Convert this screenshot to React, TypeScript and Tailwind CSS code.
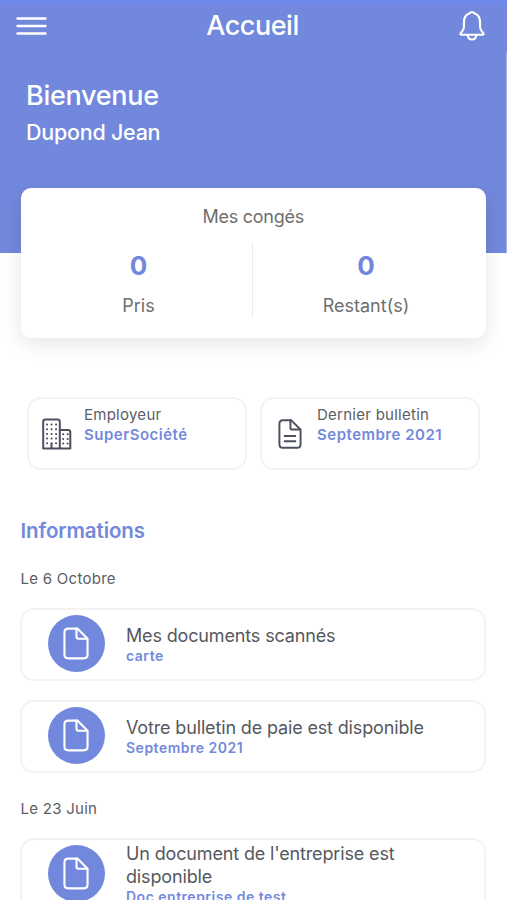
import React from 'react';

interface InfoItem {
  title: string;
  subtitle: string;
}

interface InfoGroup {
  date: string;
  items: InfoItem[];
}

const groups: InfoGroup[] = [
  {
    date: 'Le 6 Octobre',
    items: [
      { title: 'Mes documents scannés', subtitle: 'carte' },
      { title: 'Votre bulletin de paie est disponible', subtitle: 'Septembre 2021' },
    ],
  },
  {
    date: 'Le 23 Juin',
    items: [{ title: "Un document de l'entreprise est disponible", subtitle: 'Doc entreprise de test' }],
  },
];

const MenuIcon = () => (
  <svg width="32" height="20" viewBox="0 0 32 20" fill="none" stroke="currentColor" strokeWidth="2.4" strokeLinecap="round">
    <path d="M2.5 2.5h28M2.5 10h28M2.5 17.5h28" />
  </svg>
);

const BellIcon = () => (
  <svg width="28" height="32" viewBox="0 0 28 32" fill="none" stroke="currentColor" strokeWidth="2.1" strokeLinejoin="round" strokeLinecap="round">
    <path d="M14 2c-1 0-1.900.9-2.900 1.600C7.800 4.900 6 8 6 12v4.500c0 2.200-.6 3.300-1.700 4.700l-1.700 2.100c-.6.8-.3 1.500.7 1.500h21.400c1 0 1.300-.7.7-1.500l-1.700-2.100c-1.100-1.400-1.700-2.500-1.700-4.700V12c0-4-1.800-7.100-5.100-8.400C15.900 2.900 15 2 14 2z" />
    <path d="M9.800 25c.1 2.900 1.900 4.500 4.200 4.500s4.100-1.600 4.200-4.500" />
  </svg>
);

const BuildingIcon = () => (
  <svg width="30" height="32" viewBox="0 0 30 32" fill="none" stroke="currentColor" strokeWidth="2" strokeLinejoin="round" strokeLinecap="round">
    <path d="M1.2 30.5V3.800q0-2.300 2.300-2.300h12q2.300 0 2.300 2.300v26.700M17.800 12h8.200q2.300 0 2.300 2.300v16.200M1.200 30.500h27.100M9.500 30v-4" />
    <path d="M5 6.500h10M5 11.200h10M5 15.900h10M5 20.600h10M5 25.300h10M21.100 16.200h4.600M21.100 20.900h4.600M21.100 25.600h4.600" strokeDasharray="0.1 4.4" />
  </svg>
);

const FileIcon = ({ lines = false }: { lines?: boolean }) => (
  <svg
    width={lines ? 24 : 26}
    height={lines ? 30 : 33}
    viewBox="0 0 27 34"
    fill="none"
    stroke="currentColor"
    strokeWidth="2.2"
    strokeLinejoin="round"
    strokeLinecap="round"
  >
    <path d="M15 1.500H5.500c-2.700 0-4 1.300-4 4v23c0 2.700 1.300 4 4 4h16c2.700 0 4-1.300 4-4V12z" />
    <path d="M14 1.500v8.300c0 1.500.8 2.200 2.200 2.200h8.800" />
    {lines && <path d="M7.500 19.300h12M7.500 25.300h12" />}
  </svg>
);

const SummaryCard = ({ icon, label, value }: { icon: React.ReactNode; label: string; value: string }) => (
  <div className="flex h-[73px] w-[220px] rounded-[14px] border-2 border-[#f3f3f4] bg-white pl-[13px]">
    <div className="flex w-[30px] items-center justify-center text-[#4c4f5e]">{icon}</div>
    <div className="pt-[6px] pl-[12.5px] text-[15px] leading-5 whitespace-nowrap">
      <div className="tracking-[0.26px] text-[#5d5e64]">{label}</div>
      <div className="font-semibold tracking-[0.5px] text-[#7389dc]">{value}</div>
    </div>
  </div>
);

const InfoCard = ({ item }: { item: InfoItem }) => (
  <div className="flex h-[73px] items-center rounded-[14px] border-2 border-[#f3f3f4] bg-white pb-px pl-[26px]">
    <div className="mb-px flex size-[57px] shrink-0 items-center justify-center rounded-full bg-[#7188dc] pr-px text-white">
      <FileIcon />
    </div>
    <div className="w-[340px] pl-[21px]">
      <div className="text-[18px] leading-[23px] tracking-[-0.15px] text-[#56585e]">{item.title}</div>
      <div className="text-[14px] leading-[18px] font-semibold tracking-[0.5px] text-[#7389dc]">{item.subtitle}</div>
    </div>
  </div>
);

const Counter = ({ value, label }: { value: number; label: string }) => (
  <div className="flex-1 text-center">
    <div className="pt-[8px] text-[26px] leading-[32px] font-bold text-[#7188dc]">{value}</div>
    <div className="pt-[13px] text-[18px] leading-[22px] text-[#6e6e70]">{label}</div>
  </div>
);

export default function App() {
  return (
    <div className="h-[900px] w-[507px] overflow-hidden bg-white font-['Inter',sans-serif]">
      <section className="h-[252.5px] bg-[#7188dc] bg-linear-to-b from-[#6e88ec] from-[1%] to-[#7188dc] to-[2.5%] text-white">
        <header className="flex h-[52px] items-center justify-between pr-[21px] pl-[15px]">
          <button className="w-[32px]">
            <MenuIcon />
          </button>
          <h1 className="text-[27px] leading-8 font-medium tracking-[-0.45px]">Accueil</h1>
          <button className="w-[28px]">
            <BellIcon />
          </button>
        </header>
        <div className="h-[200.5px] border-r border-[#a3b1e9] pt-[28px] pl-[26px]">
          <div className="text-[27px] leading-8 font-medium tracking-[-0.3px]">Bienvenue</div>
          <div className="pt-[7px] text-[21.5px] leading-[26px] font-medium tracking-[-0.25px]">Dupond Jean</div>
        </div>
      </section>

      <section className="relative -mt-[64.5px] ml-[20.5px] h-[150px] w-[465.5px] rounded-[10px] bg-white pt-[17px] shadow-[0_6px_20px_rgba(0,0,0,0.1)]">
        <h2 className="text-center text-[18px] leading-[24px] tracking-[-0.25px] text-[#6e6e70]">Mes congés</h2>
        <div className="mt-[13px] flex pr-[7px] pl-[5px]">
          <Counter value={0} label="Pris" />
          <div className="h-[76px] w-[1.5px] bg-[#ececee]" />
          <Counter value={0} label="Restant(s)" />
        </div>
      </section>

      <section className="mt-[59px] ml-[26.5px] flex gap-[13px]">
        <SummaryCard icon={<BuildingIcon />} label="Employeur" value="SuperSociété" />
        <SummaryCard icon={<FileIcon lines />} label="Dernier bulletin" value="Septembre 2021" />
      </section>

      <section className="mt-[46px] ml-[20px] w-[466px]">
        <h2 className="pl-[0.5px] text-[20.5px] leading-[29px] font-semibold tracking-[-0.1px] text-[#7389dc]">Informations</h2>
        {groups.map((group, i) => (
          <div key={group.date} className={i === 0 ? 'pt-[24px]' : 'pt-[26px]'}>
            <h3 className="pl-[0.5px] text-[15px] leading-5 tracking-[0.27px] text-[#5d5e64]">{group.date}</h3>
            <div className="mt-[19px] flex flex-col gap-[19px]">
              {group.items.map((item) => (
                <InfoCard key={item.title} item={item} />
              ))}
            </div>
          </div>
        ))}
      </section>
    </div>
  );
}
